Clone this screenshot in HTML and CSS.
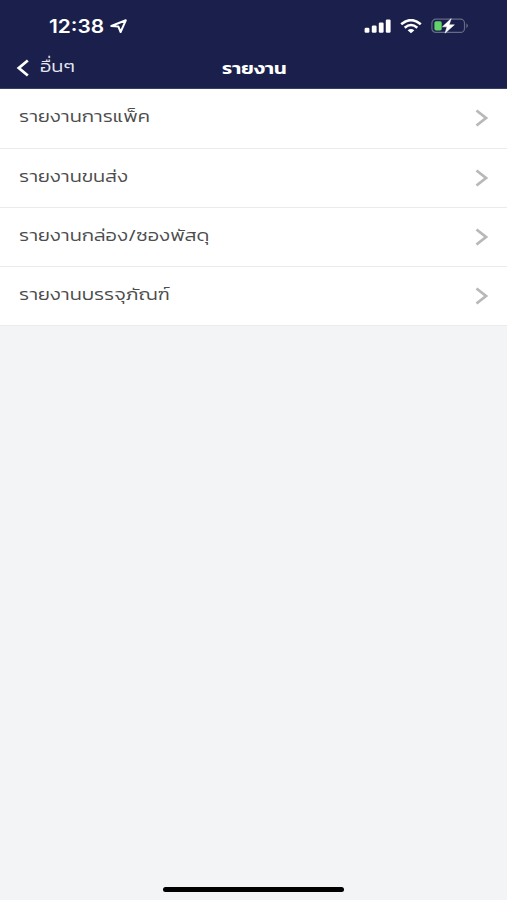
FILE: index.html
```html
<!DOCTYPE html>
<html lang="th">
<head>
<meta charset="utf-8">
<title>รายงาน</title>
<link rel="stylesheet" href="styles.css">
</head>
<body>
<header class="header">
  <div class="status">
    <div class="clock"><span class="time">12:38</span>
      <svg class="location" width="18" height="15" viewBox="0 0 18 15"><path d="M1.3 7 15.8 1.3 10.6 13 8.4 7.6Z"/></svg>
    </div>
    <div class="indicators">
      <svg width="27" height="15" viewBox="0 0 27 15" fill="#fff"><rect x=".6" y="8.8" width="4.8" height="5" rx="1.3"/><rect x="7.8" y="6.4" width="4.8" height="7.4" rx="1.3"/><rect x="14.8" y="3.4" width="4.8" height="10.4" rx="1.3"/><rect x="21.8" y="0.4" width="4.8" height="13.4" rx="1.3"/></svg>
      <svg class="wifi" width="22" height="15" viewBox="0 0 22 15"><path d="M1.2 5.3Q11-3 20.8 5.3M4.7 8.7Q11 3.3 17.3 8.7"/><path class="wifi-dot" d="M7.6 11.2Q11 8.7 14.4 11.2L11 14.2Z"/></svg>
      <svg width="38" height="16" viewBox="0 0 38 16"><rect x=".9" y="1.2" width="32.6" height="13.2" rx="4" fill="none" stroke="#666b87" stroke-width="1.2"/><path d="M35.4 5.3Q38.4 7.8 35.4 10.3Z" fill="#666b87"/><rect x="3.4" y="3.2" width="7.3" height="9.2" rx="1.6" fill="#62d368"/><path d="M20.2 .6 11.4 8.8H16L14 15.2 23.4 6.8H18.2Z" fill="#fff" stroke="#fff" stroke-width=".5"/></svg>
    </div>
  </div>
  <nav class="navbar">
    <a class="back"><svg width="13" height="18" viewBox="0 0 13 18"><path d="M11.8 1.5 2.8 9 11.8 16.5"/></svg><span class="back-label">อื่นๆ</span></a>
    <h1 class="title">รายงาน</h1>
  </nav>
</header>
<main class="list">
  <a class="row"><span class="label">รายงานการแพ็ค</span><svg class="chevron" width="14" height="18" viewBox="0 0 14 18"><path d="M1.5 1.5 11 9 1.5 16.5"/></svg></a>
  <a class="row"><span class="label">รายงานขนส่ง</span><svg class="chevron" width="14" height="18" viewBox="0 0 14 18"><path d="M1.5 1.5 11 9 1.5 16.5"/></svg></a>
  <a class="row"><span class="label">รายงานกล่อง/ซองพัสดุ</span><svg class="chevron" width="14" height="18" viewBox="0 0 14 18"><path d="M1.5 1.5 11 9 1.5 16.5"/></svg></a>
  <a class="row"><span class="label">รายงานบรรจุภัณฑ์</span><svg class="chevron" width="14" height="18" viewBox="0 0 14 18"><path d="M1.5 1.5 11 9 1.5 16.5"/></svg></a>
</main>
<footer class="home"><div class="home-bar"></div></footer>
</body>
</html>
```
FILE: styles.css
```css
* { box-sizing: border-box; }
body { margin: 0; height: 900px; display: flex; flex-direction: column; overflow: hidden; background: #f2f4f6; color: #4c4c4c; font-family: Kanit, Prompt, "Noto Sans Thai", "Noto Sans", sans-serif; }
.header { height: 89.4px; background: #1a1f4b; color: #fff; border-bottom: 1px solid #3a3e64; }
.status { height: 48px; padding: 4px 38px 0 49px; display: flex; align-items: center; justify-content: space-between; }
.clock, .indicators { display: flex; align-items: center; }
.clock { gap: 6px; }
.time { width: 55px; font: 600 18.5px/24px Inter, sans-serif; white-space: nowrap; transform: scaleX(1.13); transform-origin: left; }
.location { fill: none; stroke: #fff; stroke-width: 2; stroke-linejoin: round; }
.indicators { gap: 9px; }
.wifi { fill: none; stroke: #fff; stroke-width: 2.6; }
.wifi-dot { fill: #fff; stroke: none; }
.navbar { height: 40px; padding: 0 15px 0 16px; display: grid; grid-template-columns: 1fr auto 1fr; align-items: center; }
.back { display: flex; align-items: center; gap: 11px; }
.back svg { fill: none; stroke: #fff; stroke-width: 2.8; }
.back-label { font-size: 17px; font-weight: 300; line-height: 24px; color: #e6e8f2; margin-bottom: 4px; transform: scaleX(1.18); transform-origin: left; }
.title { margin: 0; font-size: 17px; line-height: 24px; font-weight: 600; transform: scaleX(1.18); }
.row { height: 59.2px; padding: 0 18px 0 19px; display: flex; align-items: center; justify-content: space-between; background: #fff; border-bottom: 1px solid #e9ebec; }
.label { font-size: 17px; font-weight: 300; line-height: 24px; margin-bottom: 4px; white-space: nowrap; transform: scaleX(1.18); transform-origin: left; }
.chevron { fill: none; stroke: #b8b8b8; stroke-width: 2.8; }
.home { margin-top: auto; height: 13px; display: flex; justify-content: center; }
.home-bar { width: 181px; height: 5px; border-radius: 3px; background: #000; }
```
